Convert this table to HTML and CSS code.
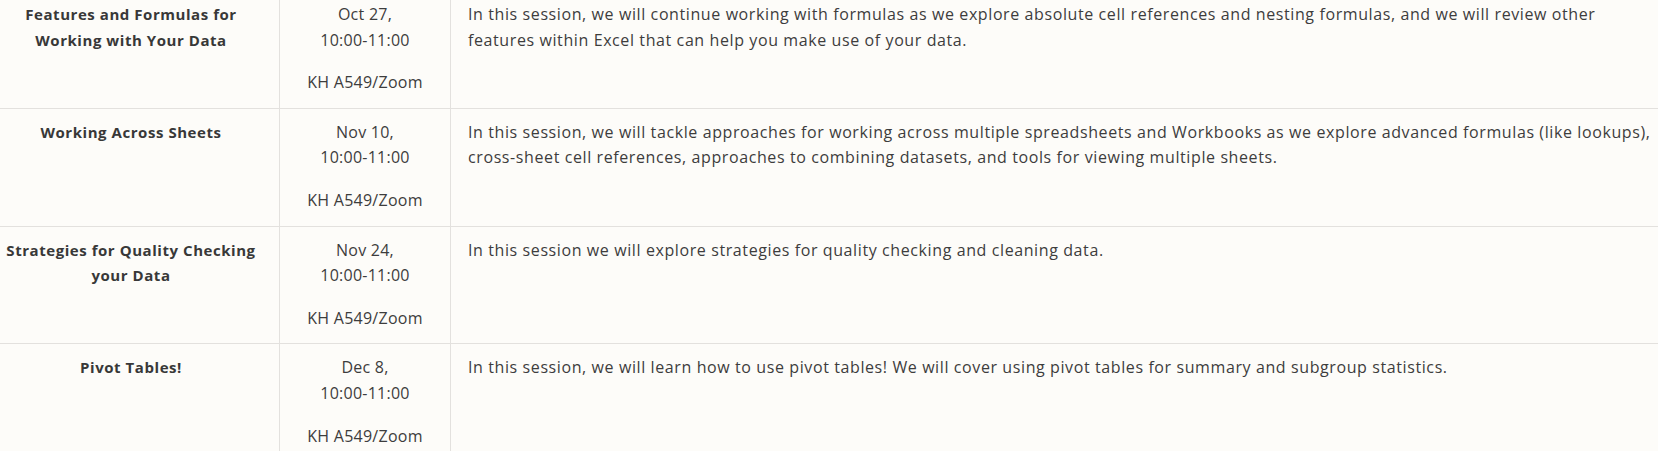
FILE: index.html
```html
<!DOCTYPE html>
<html lang="en">
<head>
<meta charset="utf-8">
<title>Excel Sessions</title>
<link rel="stylesheet" href="styles.css">
</head>
<body>
<div class="schedule">
  <div class="row">
    <div class="cell title">Features and Formulas for Working with Your Data</div>
    <div class="cell when"><p>Oct 27,<br>10:00-11:00</p><p>KH A549/Zoom</p></div>
    <div class="cell desc">In this session, we will continue working with formulas as we explore absolute cell references and nesting formulas, and we will review other features within Excel that can help you make use of your data.</div>
  </div>
  <div class="row">
    <div class="cell title">Working Across Sheets</div>
    <div class="cell when"><p>Nov 10,<br>10:00-11:00</p><p>KH A549/Zoom</p></div>
    <div class="cell desc">In this session, we will tackle approaches for working across multiple spreadsheets and Workbooks as we explore advanced formulas (like lookups), cross-sheet cell references, approaches to combining datasets, and tools for viewing multiple sheets.</div>
  </div>
  <div class="row">
    <div class="cell title">Strategies for Quality Checking your Data</div>
    <div class="cell when"><p>Nov 24,<br>10:00-11:00</p><p>KH A549/Zoom</p></div>
    <div class="cell desc">In this session we will explore strategies for quality checking and cleaning data.</div>
  </div>
  <div class="row">
    <div class="cell title">Pivot Tables!</div>
    <div class="cell when"><p>Dec 8,<br>10:00-11:00</p><p>KH A549/Zoom</p></div>
    <div class="cell desc">In this session, we will learn how to use pivot tables! We will cover using pivot tables for summary and subgroup statistics.</div>
  </div>
</div>
</body>
</html>
```
FILE: styles.css
```css
html, body {
  margin: 0;
  padding: 0;
  background: #fdfcf9;
}
body {
  font-family: "Open Sans", "Liberation Sans", sans-serif;
  font-size: 16px;
  line-height: 25.6px;
  color: #3d3d3d;
  overflow: hidden;
}
.schedule {
  margin: -10px 0 0 -17px;
  width: 1720px;
}
.row {
  display: grid;
  grid-template-columns: 297px 171px 1225px;
  border-top: 1px solid #e3e1de;
}
.cell {
  padding: 11px 17px 12px;
}
.title {
  border-right: 1px solid #e3e1de;
  text-align: center;
  font-weight: 700;
  font-size: 15px;
  letter-spacing: 0.55px;
  color: #383838;
}
.when {
  border-right: 1px solid #e3e1de;
  text-align: center;
  letter-spacing: 0.25px;
}
.when p {
  margin: 0;
}
.when p + p {
  margin-top: 17px;
}
.desc {
  text-align: left;
  letter-spacing: 0.6px;
}
```
